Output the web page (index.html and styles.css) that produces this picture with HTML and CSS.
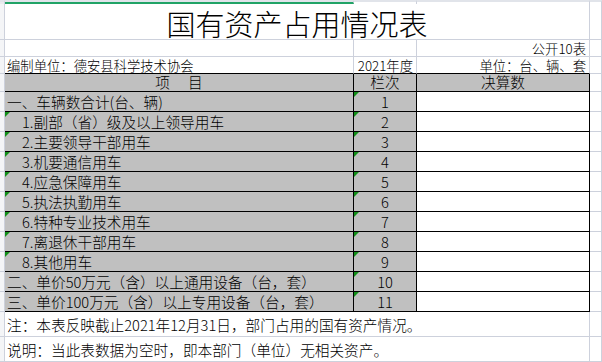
FILE: index.html
```html
<!DOCTYPE html>
<html lang="zh-CN">
<head>
<meta charset="utf-8">
<title>国有资产占用情况表</title>
<link rel="stylesheet" href="styles.css">
</head>
<body>
<div class="sheet">
  <!-- top strip -->
  <div class="c lh top"></div>
  <div class="c top sel"></div>
  <div class="c top"></div>
  <div class="c top"></div>
  <div class="c top"></div>

  <!-- title -->
  <div class="c lh"></div>
  <div class="c span3 title">国有资产占用情况表</div>
  <div class="c"></div>

  <!-- row 2 -->
  <div class="c lh"></div>
  <div class="c"></div>
  <div class="c"></div>
  <div class="c small right">公开10表</div>
  <div class="c"></div>

  <!-- row 3 -->
  <div class="c lh"></div>
  <div class="c small bb">编制单位：德安县科学技术协会</div>
  <div class="c small right bb">2021年度</div>
  <div class="c small right bb">单位：台、辆、套</div>
  <div class="c"></div>

  <!-- header -->
  <div class="c lh"></div>
  <div class="c gray bk head center">项<span class="gap"></span>目</div>
  <div class="c gray bk head center">栏次</div>
  <div class="c gray bk head center">决算数</div>
  <div class="c"></div>

  <div class="c lh"></div>
  <div class="c gray bk">一、车辆数合计(台、辆)</div>
  <div class="c gray bk center t">1</div>
  <div class="c bk"></div>
  <div class="c"></div>

  <div class="c lh"></div>
  <div class="c gray bk item t">1.副部（省）级及以上领导用车</div>
  <div class="c gray bk center t">2</div>
  <div class="c bk"></div>
  <div class="c"></div>

  <div class="c lh"></div>
  <div class="c gray bk item t">2.主要领导干部用车</div>
  <div class="c gray bk center t">3</div>
  <div class="c bk"></div>
  <div class="c"></div>

  <div class="c lh"></div>
  <div class="c gray bk item t">3.机要通信用车</div>
  <div class="c gray bk center t">4</div>
  <div class="c bk"></div>
  <div class="c"></div>

  <div class="c lh"></div>
  <div class="c gray bk item t">4.应急保障用车</div>
  <div class="c gray bk center t">5</div>
  <div class="c bk"></div>
  <div class="c"></div>

  <div class="c lh"></div>
  <div class="c gray bk item t">5.执法执勤用车</div>
  <div class="c gray bk center t">6</div>
  <div class="c bk"></div>
  <div class="c"></div>

  <div class="c lh"></div>
  <div class="c gray bk item t">6.特种专业技术用车</div>
  <div class="c gray bk center t">7</div>
  <div class="c bk"></div>
  <div class="c"></div>

  <div class="c lh"></div>
  <div class="c gray bk item t">7.离退休干部用车</div>
  <div class="c gray bk center t">8</div>
  <div class="c bk"></div>
  <div class="c"></div>

  <div class="c lh"></div>
  <div class="c gray bk item t">8.其他用车</div>
  <div class="c gray bk center t">9</div>
  <div class="c bk"></div>
  <div class="c"></div>

  <div class="c lh"></div>
  <div class="c gray bk">二、单价50万元（含）以上通用设备（台，套）</div>
  <div class="c gray bk center t">10</div>
  <div class="c bk"></div>
  <div class="c"></div>

  <div class="c lh"></div>
  <div class="c gray bk">三、单价100万元（含）以上专用设备（台，套）</div>
  <div class="c gray bk center t">11</div>
  <div class="c bk"></div>
  <div class="c"></div>

  <!-- notes -->
  <div class="c lh"></div>
  <div class="c span3 note">注：本表反映截止2021年12月31日，部门占用的国有资产情况。</div>
  <div class="c"></div>

  <div class="c lh"></div>
  <div class="c span3 note">说明：当此表数据为空时，即本部门（单位）无相关资产。</div>
  <div class="c"></div>
</div>
</body>
</html>
```

FILE: styles.css
```css
html, body {
  margin: 0;
  padding: 0;
  background: #ffffff;
}

body {
  font-family: "Noto Sans CJK SC", "Noto Sans", sans-serif;
  font-weight: 300;
  color: #000;
  overflow: hidden;
}

.sheet {
  display: grid;
  grid-template-columns: 5px 349px 63px 173px 1fr;
  grid-template-rows: 4px 36px 17px 17px 18px repeat(11, 20px) 25px 25px;
  width: 602px;
  height: 362px;
  font-size: 14.67px;
}

.c {
  box-sizing: border-box;
  border-right: 1px solid #cdd1dc;
  border-bottom: 1px solid #cdd1dc;
  display: flex;
  align-items: center;
  padding: 0 0 0 2px;
  white-space: nowrap;
  overflow: visible;
  line-height: 1;
  position: relative;
}

.lh {
  background: #f4f5f7;
  padding: 0;
}

.top {
  border-top: 2px solid #e1e4ea;
  border-bottom: 0;
  background: #ffffff;
}

.lh.top {
  background: #e9ebef;
}

.sel {
  border-bottom: 2px solid #21a366;
}

.span3 {
  grid-column: span 3;
}

.title {
  justify-content: center;
  font-size: 29px;
  padding: 3px 0 0 0;
}

.small {
  font-size: 13.33px;
  padding-top: 2px;
}

.right {
  justify-content: flex-end;
  padding-right: 3px;
  padding-left: 0;
}

.bb {
  border-bottom-color: #000;
}

.gray {
  background: #c0c0c0;
}

.bk {
  border-right-color: #000;
  border-bottom-color: #000;
  padding-top: 1px;
}

.bk.head {
  padding-top: 0;
}

.center {
  justify-content: center;
  padding-left: 0;
}

.item {
  padding-left: 17px;
}

.gap {
  display: inline-block;
  width: 18px;
}

.note {
  padding-left: 2px;
  padding-top: 2px;
}

.t::before {
  content: "";
  position: absolute;
  top: 0;
  left: 0;
  width: 0;
  height: 0;
  border-top: 5px solid #13901a;
  border-right: 5px solid transparent;
}
```
